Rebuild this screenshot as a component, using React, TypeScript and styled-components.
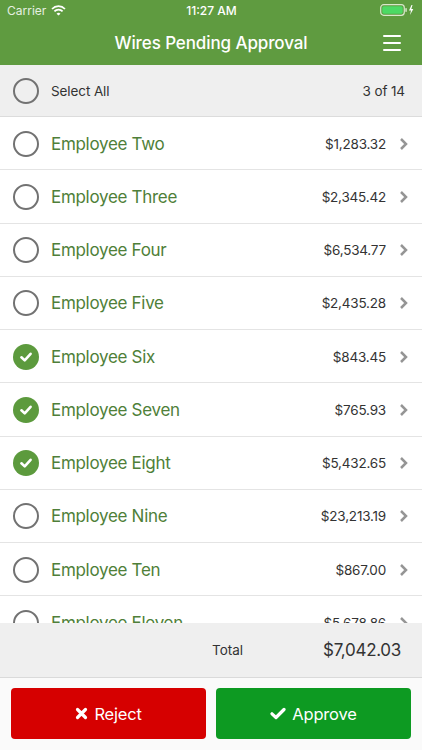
import React, { useState } from "react"
import styled, { createGlobalStyle } from "styled-components"

const GlobalStyle = createGlobalStyle`
    html, body {
        margin: 0;
        padding: 0;
        background: #ffffff;
        font-family: Inter, "Liberation Sans", sans-serif;
    }
    * {
        box-sizing: border-box;
    }
`

type Wire = {
    name: string
    amount: string
    checked: boolean
}

const wires: Wire[] = [
    { name: "Employee Two", amount: "$1,283.32", checked: false },
    { name: "Employee Three", amount: "$2,345.42", checked: false },
    { name: "Employee Four", amount: "$6,534.77", checked: false },
    { name: "Employee Five", amount: "$2,435.28", checked: false },
    { name: "Employee Six", amount: "$843.45", checked: true },
    { name: "Employee Seven", amount: "$765.93", checked: true },
    { name: "Employee Eight", amount: "$5,432.65", checked: true },
    { name: "Employee Nine", amount: "$23,213.19", checked: false },
    { name: "Employee Ten", amount: "$867.00", checked: false },
    { name: "Employee Eleven", amount: "$5,678.86", checked: false },
]

const Screen = styled.div`
    width: 422px;
    height: 750px;
    display: flex;
    flex-direction: column;
    overflow: hidden;
`

const Header = styled.header`
    background: #5f9b40;
    color: #ffffff;
    height: 65px;
    flex-shrink: 0;
    display: flex;
    flex-direction: column;
`

const StatusBar = styled.div`
    height: 20px;
    display: grid;
    grid-template-columns: 1fr auto 1fr;
    align-items: center;
    padding: 0 6px 0 7px;
    font-size: 12px;

    .left {
        display: flex;
        align-items: center;
        gap: 5px;
        color: #e6f0e0;
    }

    .time {
        font-weight: 500;
    }

    .right {
        display: flex;
        justify-content: flex-end;
        align-items: center;
        gap: 2px;
    }
`

const NavBar = styled.div`
    flex: 1;
    display: grid;
    grid-template-columns: 60px 1fr 60px;
    align-items: center;

    h1 {
        margin: 0;
        text-align: center;
        font-size: 17px;
        font-weight: 500;
        letter-spacing: -0.1px;
    }
`

const MenuButton = styled.div`
    justify-self: end;
    margin-right: 21px;
    width: 18px;
    display: flex;
    flex-direction: column;
    gap: 5px;

    span {
        display: block;
        height: 2px;
        background: #ffffff;
        border-radius: 1px;
    }
`

const SelectAllRow = styled.div`
    height: 52px;
    flex-shrink: 0;
    background: #efefef;
    border-bottom: 1px solid #dcdcdc;
    display: flex;
    align-items: center;
    padding: 0 17px 0 13px;
    font-size: 13.5px;
    letter-spacing: -0.1px;
    color: #333333;

    .label {
        margin-left: 12px;
        flex: 1;
    }
`

const List = styled.div`
    flex: 1;
    min-height: 0;
    overflow: hidden;
`

const Row = styled.div`
    height: 53.25px;
    border-bottom: 1.5px solid #e4e4e4;
    display: flex;
    align-items: center;
    padding: 1px 14px 0 13px;
`

const Name = styled.span`
    margin-left: 12px;
    flex: 1;
    font-size: 17px;
    letter-spacing: -0.3px;
    color: #4f7f39;
`

const Amount = styled.span`
    font-size: 13.5px;
    letter-spacing: -0.2px;
    color: #333333;
    margin-right: 13px;
`

const Circle = styled.div<{ $checked: boolean }>`
    width: 26px;
    height: 26px;
    border-radius: 50%;
    border: ${p => (p.$checked ? "none" : "2px solid #727272")};
    background: ${p => (p.$checked ? "#5c9a3d" : "transparent")};
    display: flex;
    align-items: center;
    justify-content: center;
    flex-shrink: 0;
`

const TotalBar = styled.div`
    height: 55px;
    flex-shrink: 0;
    background: #efefef;
    border-bottom: 1px solid #dadada;
    display: flex;
    align-items: center;
    padding: 0 21px 0 212px;

    .label {
        flex: 1;
        font-size: 13.5px;
        color: #333333;
    }

    .value {
        font-size: 17px;
        letter-spacing: -0.3px;
        color: #333333;
    }
`

const Actions = styled.div`
    height: 72px;
    flex-shrink: 0;
    background: #fafafa;
    display: grid;
    grid-template-columns: 1fr 1fr;
    gap: 10px;
    padding: 10px 11px 11px;
`

const ActionButton = styled.button<{ $color: string }>`
    border: none;
    border-radius: 4px;
    background: ${p => p.$color};
    color: #ffffff;
    font-family: inherit;
    font-size: 16.5px;
    letter-spacing: -0.2px;
    display: flex;
    align-items: center;
    justify-content: center;
    gap: 6px;
    height: 51px;
`

const Check = () => (
    <svg width="16" height="16" viewBox="0 0 16 16">
        <path d="M3.4 8.3 L6.7 11.4 L12.6 4.8" fill="none" stroke="#fff" strokeWidth="2.6" strokeLinecap="round" strokeLinejoin="round" />
    </svg>
)

const Chevron = () => (
    <svg width="9" height="14" viewBox="0 0 9 14">
        <path d="M2 2 L7 7 L2 12" fill="none" stroke="#959595" strokeWidth="2.5" />
    </svg>
)

const Wifi = () => (
    <svg width="15" height="11" viewBox="0 0 15 11">
        <path d="M1 4 A9 9 0 0 1 14 4" fill="none" stroke="#fff" strokeWidth="1.7" />
        <path d="M3.4 6.4 A5.6 5.6 0 0 1 11.6 6.4" fill="none" stroke="#fff" strokeWidth="1.7" />
        <path d="M5.5 8.7 L7.5 10.6 L9.5 8.7 A2.8 2.8 0 0 0 5.5 8.7 Z" fill="#fff" />
    </svg>
)

const Battery = () => (
    <svg width="36" height="12" viewBox="0 0 36 12">
        <rect x="0.7" y="0.7" width="23.6" height="10.6" rx="3" fill="none" stroke="#d8e8cc" strokeWidth="1.2" />
        <rect x="2.3" y="2.3" width="20.4" height="7.4" rx="1.6" fill="#4cd964" />
        <rect x="25.3" y="4" width="1.5" height="4" rx="0.7" fill="#d8e8cc" />
        <path d="M31.5 1 L29 6.6 H31 L30 11 L33.3 5 H31.3 L32.5 1 Z" fill="#fff" />
    </svg>
)

const XIcon = () => (
    <svg width="13" height="13" viewBox="0 0 13 13">
        <path d="M2.5 2.5 L10.5 10.5 M10.5 2.5 L2.5 10.5" stroke="#fff" strokeWidth="3.2" strokeLinecap="round" />
    </svg>
)

const CheckIcon = () => (
    <svg width="16" height="13" viewBox="0 0 16 13">
        <path d="M2 6.8 L6 10.5 L14 2.5" fill="none" stroke="#fff" strokeWidth="3.2" strokeLinecap="round" strokeLinejoin="round" />
    </svg>
)

/**
 * List of wires waiting to be approved or rejected.
 */
const App: React.FC = () => {
    const [items, setItems] = useState(wires)

    const toggle = (index: number) =>
        setItems(prev => prev.map((w, i) => (i === index ? { ...w, checked: !w.checked } : w)))

    return (
        <Screen>
            <GlobalStyle />
            <Header>
                <StatusBar>
                    <div className="left">
                        Carrier <Wifi />
                    </div>
                    <div className="time">11:27 AM</div>
                    <div className="right">
                        <Battery />
                    </div>
                </StatusBar>
                <NavBar>
                    <span />
                    <h1>Wires Pending Approval</h1>
                    <MenuButton>
                        <span />
                        <span />
                        <span />
                    </MenuButton>
                </NavBar>
            </Header>

            <SelectAllRow>
                <Circle $checked={false} />
                <span className="label">Select All</span>
                <span>3 of 14</span>
            </SelectAllRow>

            <List>
                {items.map((wire, i) => (
                    <Row key={wire.name} onClick={() => toggle(i)}>
                        <Circle $checked={wire.checked}>{wire.checked && <Check />}</Circle>
                        <Name>{wire.name}</Name>
                        <Amount>{wire.amount}</Amount>
                        <Chevron />
                    </Row>
                ))}
            </List>

            <TotalBar>
                <span className="label">Total</span>
                <span className="value">$7,042.03</span>
            </TotalBar>

            <Actions>
                <ActionButton $color="#d60000">
                    <XIcon /> Reject
                </ActionButton>
                <ActionButton $color="#0d9a22">
                    <CheckIcon /> Approve
                </ActionButton>
            </Actions>
        </Screen>
    )
}

export default App
